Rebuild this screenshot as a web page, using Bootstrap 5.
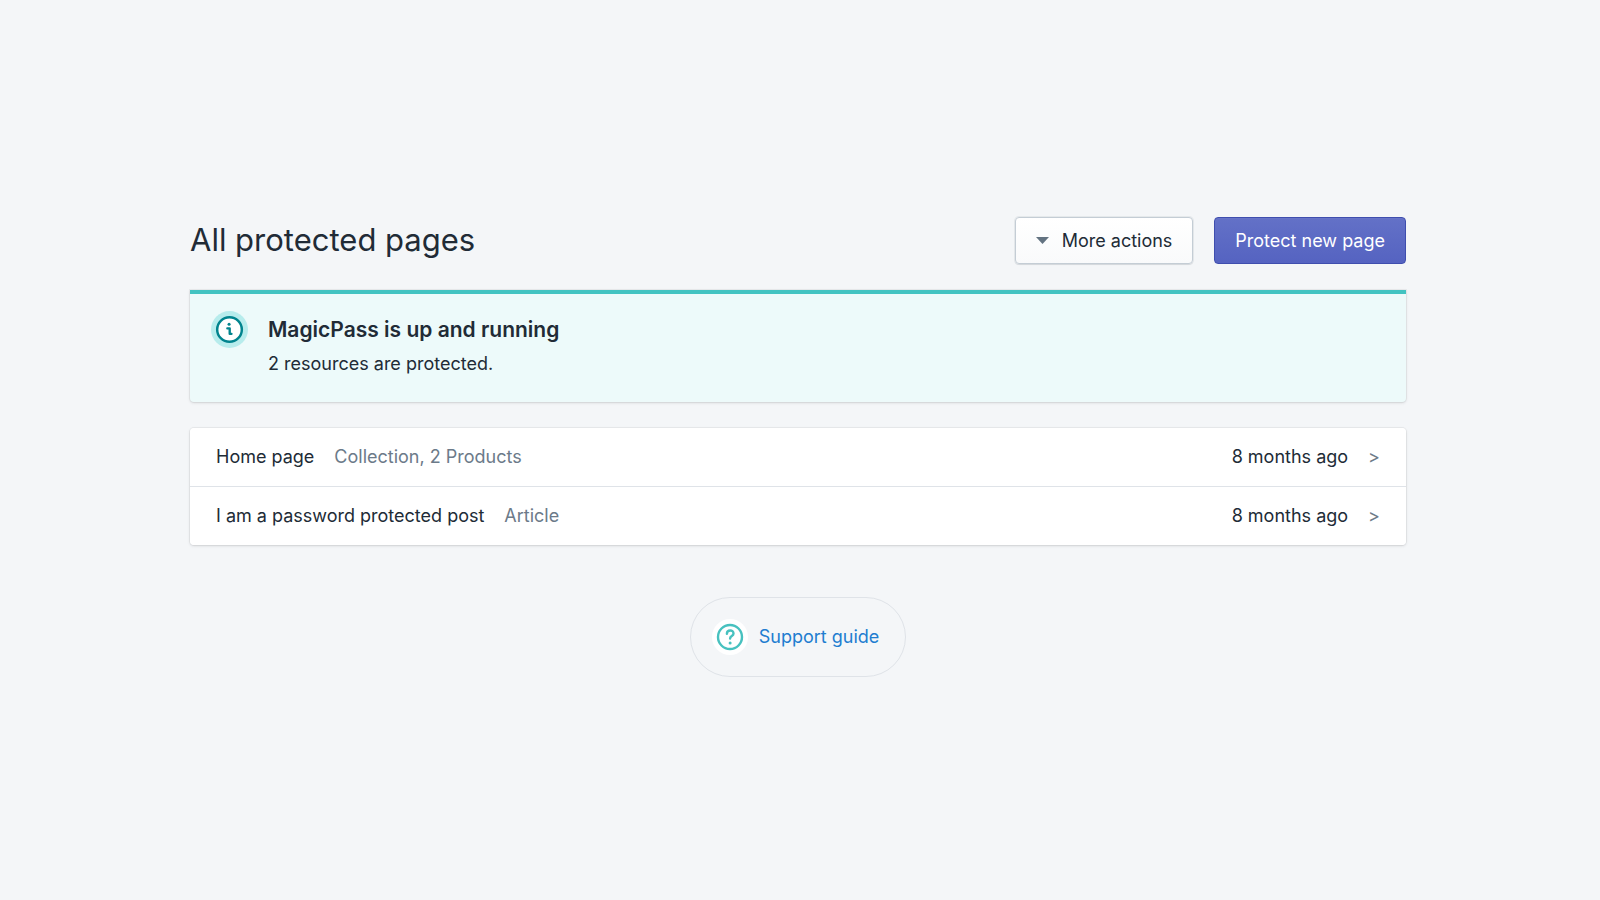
<!DOCTYPE html>
<html lang="en">
<head>
<meta charset="utf-8">
<meta name="viewport" content="width=device-width, initial-scale=1">
<title>MagicPass – All protected pages</title>
<link href="https://cdn.jsdelivr.net/npm/bootstrap@5.3.0/dist/css/bootstrap.min.css" rel="stylesheet">
<style>
  body { background: #f4f6f8; color: #212b36; font: 400 18px/28px Inter, "Liberation Sans", sans-serif; }
  .page { width: 76%; margin-right: 194px; padding-top: 217px; }
  .title-row { margin-bottom: 26px; }
  .page-title { font-size: 31px; line-height: 46px; font-weight: 400; }
  .actions { gap: 21px; }
  .btn { --bs-btn-font-size: 18px; --bs-btn-line-height: 27px; --bs-btn-padding-y: 9px; --bs-btn-padding-x: 20px; --bs-btn-border-radius: 4px; }
  .btn-more { --bs-btn-color: #212b36; --bs-btn-border-color: #c4cdd5; --bs-btn-hover-border-color: #c4cdd5; gap: 13px; background: linear-gradient(#fff, #f9fafb); box-shadow: 0 0 0 1px rgba(99, 115, 129, .1), 0 1px 1px rgba(22, 29, 37, .08); }
  .btn-protect { --bs-btn-color: #fff; --bs-btn-hover-color: #fff; --bs-btn-border-color: #3f4eae; background: linear-gradient(#6371c7, #5563c1); box-shadow: inset 0 1px 0 #6774c8; }
  .panel { border-radius: 4px; box-shadow: 0 0 0 1px rgba(63, 63, 68, .06), 0 1px 3px rgba(63, 63, 68, .16); }
  .status { gap: 20px; margin-bottom: 26px; background: #edfafa; border-top: 4px solid #42c3c1; border-radius: 0 0 4px 4px; padding: 17px 21px 24px; }
  .status h2 { font-size: 21px; line-height: 38px; font-weight: 600; margin-bottom: 1px; }
  .list-group { --bs-list-group-border-radius: 4px; --bs-list-group-border-color: #dfe3e8; --bs-list-group-color: #212b36; --bs-list-group-item-padding-x: 26px; --bs-list-group-item-padding-y: 15px; }
  .list-group-item { column-gap: 20px; }
  .muted { color: #6c7a89; }
  .page-foot { margin-top: 52px; }
  .support { border: 1px solid #dfe3e8; padding: 21px 26px 21px 21px; gap: 11px; color: #217dd0; }
</style>
<script src="https://cdn.jsdelivr.net/npm/bootstrap@5.3.0/dist/js/bootstrap.bundle.min.js" defer></script>
</head>
<body>
<main class="page ms-auto">
  <header class="title-row d-flex flex-wrap justify-content-between align-items-start">
    <h1 class="page-title mb-0">All protected pages</h1>
    <div class="actions d-flex">
      <button type="button" class="btn btn-more d-flex align-items-center"><svg width="13" height="7" viewBox="0 0 13 7" aria-hidden="true"><path d="M0 0h13L6.500 7z" fill="#637381"/></svg>More actions</button>
      <button type="button" class="btn btn-protect">Protect new page</button>
    </div>
  </header>
  <section class="panel status d-flex">
    <svg class="flex-shrink-0" width="37" height="37" viewBox="0 0 36 36" aria-hidden="true"><circle cx="18" cy="18" r="18" fill="#b7ecec"/><circle cx="18" cy="18" r="12" fill="#fff" stroke="#00848e" stroke-width="2.400"/><circle cx="17.600" cy="12.900" r="1.500" fill="#00848e"/><path d="M15.900 16.900h2.300v5.300h1.700" fill="none" stroke="#00848e" stroke-width="2.300" stroke-linecap="round" stroke-linejoin="round"/></svg>
    <div>
      <h2>MagicPass is up and running</h2>
      <p class="mb-0">2 resources are protected.</p>
    </div>
  </section>
  <div class="list-group list-group-flush panel">
    <a href="#" class="list-group-item d-flex"><span>Home page</span><span class="muted">Collection, 2 Products</span><span class="ms-auto">8 months ago</span><span class="muted">&gt;</span></a>
    <a href="#" class="list-group-item d-flex"><span>I am a password protected post</span><span class="muted">Article</span><span class="ms-auto">8 months ago</span><span class="muted">&gt;</span></a>
  </div>
  <footer class="page-foot d-flex justify-content-center">
    <a href="#" class="support d-flex align-items-center rounded-pill text-decoration-none"><svg width="36" height="36" viewBox="0 0 36 36" aria-hidden="true"><circle cx="18" cy="18" r="18" fill="#fff"/><circle cx="18" cy="18" r="12" fill="none" stroke="#47c1bf" stroke-width="2.400"/><path d="M14.900 14.700c0-4.300 6.600-4.300 6.600-.2 0 2.700-3.400 2.400-3.400 5" fill="none" stroke="#47c1bf" stroke-width="2.400" stroke-linecap="round"/><circle cx="18.100" cy="24" r="1.500" fill="#47c1bf"/></svg>Support guide</a>
  </footer>
</main>
</body>
</html>
